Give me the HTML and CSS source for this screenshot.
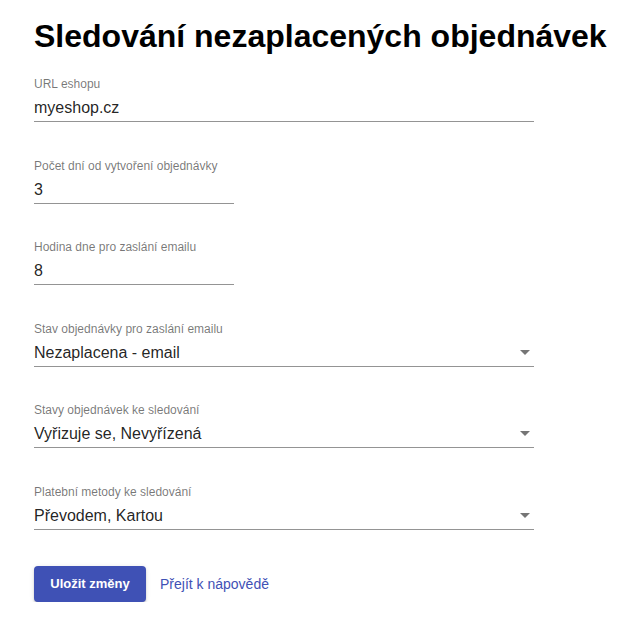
FILE: index.html
```html
<!DOCTYPE html>
<html lang="cs">
<head>
    <meta charset="UTF-8">
    <meta name="viewport" content="width=device-width, initial-scale=1.0">
    <title>Sledování nezaplacených objednávek</title>
    <link rel="stylesheet" href="styles.css">
</head>
<body>
    <div class="page">
        <h1>Sledování nezaplacených objednávek</h1>

        <div class="field wide">
            <label for="url">URL eshopu</label>
            <input type="text" id="url" value="myeshop.cz">
        </div>

        <div class="field narrow">
            <label for="days">Počet dní od vytvoření objednávky</label>
            <input type="text" id="days" value="3">
        </div>

        <div class="field narrow">
            <label for="hour">Hodina dne pro zaslání emailu</label>
            <input type="text" id="hour" value="8">
        </div>

        <div class="field wide">
            <label>Stav objednávky pro zaslání emailu</label>
            <div class="select">
                <span>Nezaplacena - email</span>
                <svg class="arrow" width="10" height="5" viewBox="0 0 10 5"><path d="M0 0l5 5 5-5z"/></svg>
            </div>
        </div>

        <div class="field wide">
            <label>Stavy objednávek ke sledování</label>
            <div class="select">
                <span>Vyřizuje se, Nevyřízená</span>
                <svg class="arrow" width="10" height="5" viewBox="0 0 10 5"><path d="M0 0l5 5 5-5z"/></svg>
            </div>
        </div>

        <div class="field wide">
            <label>Platební metody ke sledování</label>
            <div class="select">
                <span>Převodem, Kartou</span>
                <svg class="arrow" width="10" height="5" viewBox="0 0 10 5"><path d="M0 0l5 5 5-5z"/></svg>
            </div>
        </div>

        <div class="actions">
            <button class="save">Uložit změny</button>
            <a href="#" class="help">Přejít k nápovědě</a>
        </div>
    </div>
</body>
</html>
```

FILE: styles.css
```css
body {
    margin: 0;
    background-color: #fff;
    color: rgba(0, 0, 0, 0.87);
    font-family: "Liberation Sans", Arial, sans-serif;
}
.page {
    padding: 18px 0 0 34px;
}
h1 {
    margin: 0 0 23px;
    font-size: 32px;
    line-height: 37px;
    font-weight: bold;
    color: #000;
}
.field {
    display: flex;
    flex-direction: column;
    margin-bottom: 37.5px;
}
.field.wide { width: 500px; }
.field.narrow { width: 200px; }
.field label {
    font-size: 12px;
    line-height: 13px;
    color: rgba(0, 0, 0, 0.54);
}
.field input,
.select {
    box-sizing: content-box;
    height: 19px;
    padding: 7px 0 4px;
    margin: 0;
    border: none;
    border-bottom: 1px solid rgba(0, 0, 0, 0.42);
    font-family: inherit;
    font-size: 16px;
    line-height: 19px;
    color: rgba(0, 0, 0, 0.87);
    background: transparent;
    outline: none;
}
.select {
    display: flex;
    align-items: center;
    justify-content: space-between;
}
.arrow {
    fill: rgba(0, 0, 0, 0.54);
    margin-right: 4px;
}
.actions {
    display: flex;
    align-items: center;
    gap: 14px;
    margin-top: -1.5px;
}
.save {
    width: 112px;
    height: 36px;
    padding: 0;
    border: none;
    border-radius: 4px;
    background-color: #3f51b5;
    color: #fff;
    font-family: inherit;
    font-size: 13px;
    font-weight: bold;
    box-shadow: 0 3px 1px -2px rgba(0, 0, 0, 0.2), 0 2px 2px 0 rgba(0, 0, 0, 0.14), 0 1px 5px 0 rgba(0, 0, 0, 0.12);
    cursor: pointer;
}
.help {
    color: #3f51b5;
    font-size: 14px;
    text-decoration: none;
}
```
